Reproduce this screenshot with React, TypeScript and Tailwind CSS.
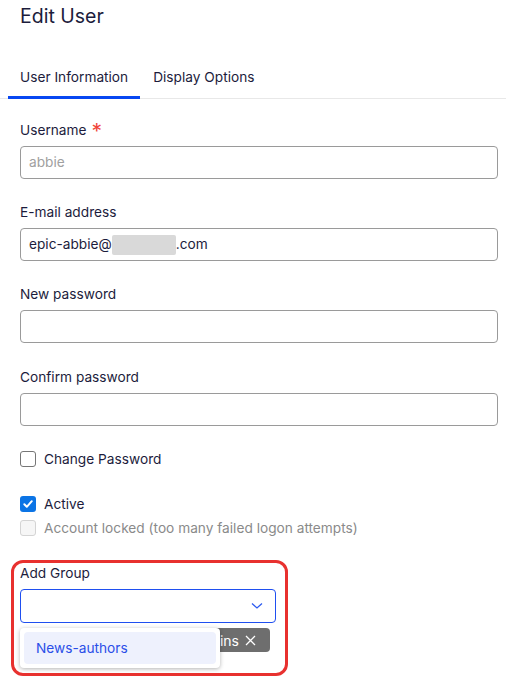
import React from "react";

function Field({ label, required, children }: { label: string; required?: boolean; children: React.ReactNode }) {
  return (
    <div className="flex flex-col">
      <div className="h-5 flex items-center text-[13.7px] leading-5 text-[#1c1c3c]">
        {label}
        {required && <span className="ml-[5px] text-[#f0453a] text-[21px] leading-none relative top-[1px]">*</span>}
      </div>
      <div className="mt-[6px]">{children}</div>
    </div>
  );
}

function TextBox({ children }: { children?: React.ReactNode }) {
  return (
    <div className="h-[33px] w-full rounded-[4px] border border-[#9a9a9a] bg-white flex items-center px-[8px] text-[13.7px] text-[#1c1c3c]">
      {children}
    </div>
  );
}

export default function App() {
  return (
    <div className="w-[506px] h-[676px] overflow-hidden bg-white relative" style={{ fontFamily: "Inter, 'Noto Sans', sans-serif" }}>
      <div className="pl-[20px] pt-[2px] h-[30px] text-[19.5px] leading-[28px] text-[#1c1c3c]">Edit User</div>

      <div className="mt-[27px] flex border-b border-[#e8e8e8] pl-[8px]">
        <div className="px-[12px] pt-[10px] pb-[8px] border-b-[3px] border-[#0747f2] text-[13.7px] leading-5 text-[#1c1c3c] mb-[-1px]">
          User Information
        </div>
        <div className="px-[13px] pt-[10px] pb-[11px] text-[13.7px] leading-5 text-[#1c1c3c]">Display Options</div>
      </div>

      <div className="pl-[20px] pr-[8px] pt-[21px] flex flex-col">
        <Field label="Username" required>
          <TextBox>
            <span className="text-[#a0a0a0]">abbie</span>
          </TextBox>
        </Field>
        <div className="mt-[23px]">
          <Field label="E-mail address">
            <TextBox>
              <span>epic-abbie@</span>
              <span className="inline-block w-[64px] h-[20px] bg-[#d9d9d9] rounded-[2px]"></span>
              <span>.com</span>
            </TextBox>
          </Field>
        </div>
        <div className="mt-[23px]">
          <Field label="New password">
            <TextBox />
          </Field>
        </div>
        <div className="mt-[24px]">
          <Field label="Confirm password">
            <TextBox />
          </Field>
        </div>

        <div className="mt-[23px] h-5 flex items-center gap-[8px] text-[13.7px] text-[#1c1c3c]">
          <span className="w-[16px] h-[16px] rounded-[3px] border border-[#767676] bg-white"></span>
          Change Password
        </div>

        <div className="mt-[25px] h-5 flex items-center gap-[8px] text-[13.7px] text-[#1c1c3c]">
          <span className="w-[16px] h-[16px] rounded-[3px] bg-[#0b74e5] flex items-center justify-center">
            <svg width="12" height="12" viewBox="0 0 12 12">
              <path d="M2.3 6.3 L4.8 8.8 L9.8 3.2" fill="none" stroke="white" strokeWidth="2" strokeLinecap="round" strokeLinejoin="round" />
            </svg>
          </span>
          Active
        </div>
        <div className="mt-[4px] h-5 flex items-center gap-[8px] text-[13.7px] text-[#8a8a8a]">
          <span className="w-[16px] h-[16px] rounded-[3px] border border-[#d4d4d4] bg-[#f6f6f6]"></span>
          Account locked (too many failed logon attempts)
        </div>

        <div className="mt-[25px] relative w-[256px]">
          <div className="h-5 flex items-center text-[13.7px] text-[#1c1c3c]">Add Group</div>
          <div className="mt-[6px] h-[34px] rounded-[4px] border border-[#1f4ff0] bg-white flex items-center justify-end pr-[12px]">
            <svg width="12" height="8" viewBox="0 0 12 8">
              <path d="M1 1.5 L6 6 L11 1.5" fill="none" stroke="#2d5bf0" strokeWidth="1.3" />
            </svg>
          </div>
          <div className="mt-[5px] flex justify-end pr-[6px]">
            <div className="h-[24px] w-[80px] rounded-[4px] bg-[#6e6e6e] text-white text-[14px] flex items-center justify-end pr-[14px] gap-[6px]">
              ins
              <svg width="11" height="11" viewBox="0 0 11 11">
                <path d="M1 1 L10 10 M10 1 L1 10" stroke="white" strokeWidth="1.3" />
              </svg>
            </div>
          </div>

          <div className="absolute left-0 top-[65px] w-[200px] h-[40px] bg-white rounded-[4px] shadow-[0_1px_4px_rgba(0,0,0,0.3)] p-[4px]">
            <div className="h-full w-full rounded-[4px] bg-[#eef1fd] flex items-center pl-[12px] text-[13.7px] text-[#2a4ee8]">
              News-authors
            </div>
          </div>

          <div className="absolute left-[-9px] top-[-3px] w-[277px] h-[116px] rounded-[12px] border-[3px] border-[#e8312f] pointer-events-none"></div>
        </div>
      </div>
    </div>
  );
}
